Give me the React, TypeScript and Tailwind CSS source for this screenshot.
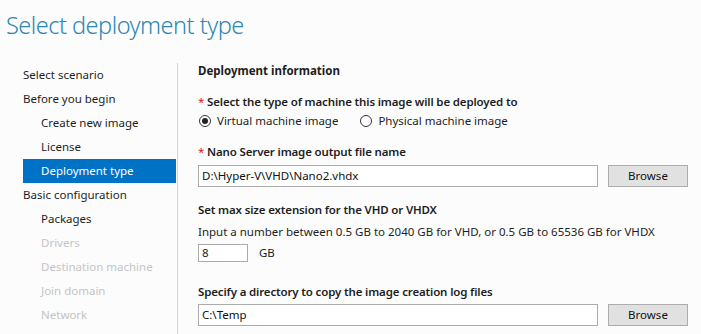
import React from "react"

type NavItem = { label: string; level: 0 | 1; state?: "active" | "disabled" }

const nav: NavItem[] = [
  { label: "Select scenario", level: 0 },
  { label: "Before you begin", level: 0 },
  { label: "Create new image", level: 1 },
  { label: "License", level: 1 },
  { label: "Deployment type", level: 1, state: "active" },
  { label: "Basic configuration", level: 0 },
  { label: "Packages", level: 1 },
  { label: "Drivers", level: 1, state: "disabled" },
  { label: "Destination machine", level: 1, state: "disabled" },
  { label: "Join domain", level: 1, state: "disabled" },
  { label: "Network", level: 1, state: "disabled" },
]

function Radio({ checked, label }: { checked?: boolean; label: string }) {
  return (
    <label className="flex items-center gap-[6px]">
      <span className="w-[12px] h-[12px] rounded-full border border-[#333] bg-white flex items-center justify-center">
        {checked && <span className="w-[6px] h-[6px] rounded-full bg-[#222]" />}
      </span>
      <span>{label}</span>
    </label>
  )
}

function Label({ children, required }: { children: React.ReactNode; required?: boolean }) {
  return (
    <div className="h-[16px] leading-[16px] font-semibold tracking-[-0.15px] text-[#1e1e1e]">
      {required && <span className="text-[#e81123] font-normal">* </span>}
      {children}
    </div>
  )
}

function PathRow({ value }: { value: string }) {
  return (
    <div className="flex items-center gap-[10px]">
      <div className="w-[400px] h-[22px] border border-[#ababab] bg-white px-[3px] leading-[20px] text-[#111]">{value}</div>
      <button className="w-[80px] h-[22px] border border-[#adadad] bg-[#e1e1e1] text-[#111] leading-[20px]">Browse</button>
    </div>
  )
}

export default function App() {
  return (
    <div className="w-[701px] h-[334px] overflow-hidden bg-[#fcfcfc] text-[11.5px] text-[#1e1e1e]" style={{ fontFamily: '"Noto Sans", "Open Sans", sans-serif' }}>
      <div className="h-[63px] pl-[6px] pt-[7px]">
        <h1 className="text-[23.5px] leading-[36px] font-light tracking-[-0.5px] text-[#2b87b4]">Select deployment type</h1>
      </div>
      <div className="flex h-[271px]">
        <div className="w-[178px] border-r border-[#d4d4d4] pl-[23px] pr-[1px]">
          {nav.map((item) => (
            <div
              key={item.label}
              className={
                "h-[24px] leading-[24px] " +
                (item.level === 1 ? "pl-[18px] " : "pl-0 ") +
                (item.state === "active"
                  ? "bg-[#0072c6] text-white"
                  : item.state === "disabled"
                  ? "text-[#c4c4c4]"
                  : "text-[#1e1e1e]")
              }
            >
              {item.label}
            </div>
          ))}
        </div>
        <div className="flex-1 pl-[20px] flex flex-col">
          <div className="h-[16px] leading-[16px] font-bold">Deployment information</div>
          <div className="mt-[15px]">
            <Label required>Select the type of machine this image will be deployed to</Label>
          </div>
          <div className="mt-[3px] h-[16px] flex items-center gap-[22px] pl-[1px]">
            <Radio checked label="Virtual machine image" />
            <Radio label="Physical machine image" />
          </div>
          <div className="mt-[15px]">
            <Label required>Nano Server image output file name</Label>
          </div>
          <div className="mt-[5px]">
            <PathRow value="D:\Hyper-V\VHD\Nano2.vhdx" />
          </div>
          <div className="mt-[15px]">
            <Label>Set max size extension for the VHD or VHDX</Label>
          </div>
          <div className="mt-[6px] h-[16px] leading-[16px]">Input a number between 0.5 GB to 2040 GB for VHD, or 0.5 GB to 65536 GB for VHDX</div>
          <div className="mt-[4px] flex items-center gap-[11px]">
            <div className="w-[50px] h-[18px] border border-[#ababab] bg-white px-[3px] leading-[16px]">8</div>
            <span>GB</span>
          </div>
          <div className="mt-[22px]">
            <Label>Specify a directory to copy the image creation log files</Label>
          </div>
          <div className="mt-[4px]">
            <PathRow value="C:\Temp" />
          </div>
        </div>
      </div>
    </div>
  )
}
